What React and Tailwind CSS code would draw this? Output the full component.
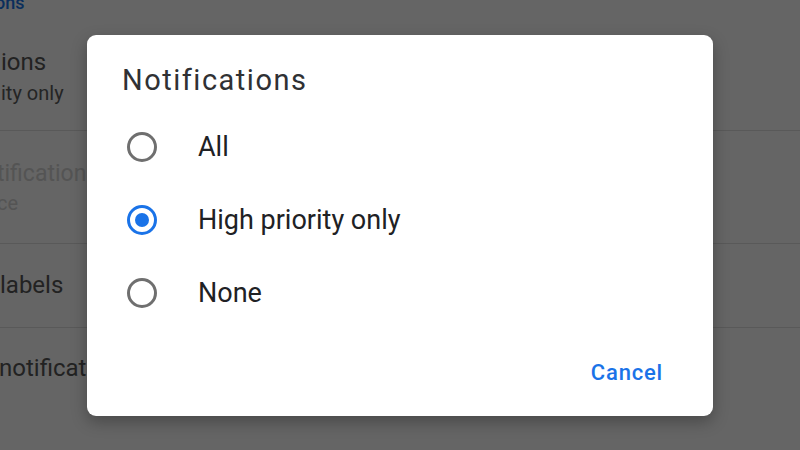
const options = [
  { label: "All", checked: false },
  { label: "High priority only", checked: true },
  { label: "None", checked: false },
];

const Radio = ({ checked }) => (
  <div
    className={`w-[30px] h-[30px] shrink-0 rounded-full border-[3px] flex items-center justify-center ${
      checked ? "border-[#1a73e8]" : "border-[#6f6f6f]"
    }`}
  >
    {checked && <div className="w-[14px] h-[14px] rounded-full bg-[#1a73e8]" />}
  </div>
);

const App = () => {
  return (
    <div
      className="relative w-[800px] h-[450px] overflow-hidden bg-[#656565]"
      style={{ fontFamily: "Roboto, 'Liberation Sans', sans-serif" }}
    >
      {/* dimmed settings list behind the dialog */}
      <div className="flex flex-col whitespace-nowrap">
        <div className="mt-[-7px] h-[20px] text-[18px] leading-[20px] font-medium text-[#0a2e5c] ml-[-5px]">
          ons
        </div>
        <div className="h-[117px] pt-[35px]">
          <div className="text-[24px] leading-[29px] text-[#222222] ml-[1px]">ions</div>
          <div className="mt-[2px] text-[20px] leading-[29px] text-[#242424] ml-[1px]">ity only</div>
        </div>
        <div className="h-[113px] border-t border-[#595959] pt-[28px]">
          <div className="text-[23px] leading-[29px] text-[#545454] ml-[-3px]">tifications</div>
          <div className="text-[20px] leading-[30px] text-[#545454] ml-[-3px]">ce</div>
        </div>
        <div className="h-[84px] border-t border-[#595959] pt-[27px]">
          <div className="text-[24px] leading-[29px] text-[#222222]">labels</div>
        </div>
        <div className="h-[84px] border-t border-[#595959] pt-[26px]">
          <div className="text-[24px] leading-[29px] text-[#222222] ml-[-1px]">notifications</div>
        </div>
      </div>

      {/* dialog */}
      <div className="absolute inset-0 flex items-center justify-center">
        <div className="w-[626px] h-[381px] bg-white rounded-[9px] shadow-[0_6px_16px_rgba(0,0,0,0.28)] flex flex-col pt-[29px] pl-[35px] pr-[50px]">
          <div className="text-[29px] leading-[32px] tracking-[1.5px] text-[#303134]">
            Notifications
          </div>
          <div className="mt-[15px] flex flex-col pl-[5px]">
            {options.map((o) => (
              <div key={o.label} className="h-[73px] flex items-center gap-[41px]">
                <Radio checked={o.checked} />
                <span className="text-[27px] leading-[73px] text-[#202124]">{o.label}</span>
              </div>
            ))}
          </div>
          <div className="mt-[31px] flex justify-end">
            <span className="text-[22px] leading-[24px] font-medium tracking-[0.8px] text-[#1a73e8]">
              Cancel
            </span>
          </div>
        </div>
      </div>
    </div>
  );
};

export default App;
